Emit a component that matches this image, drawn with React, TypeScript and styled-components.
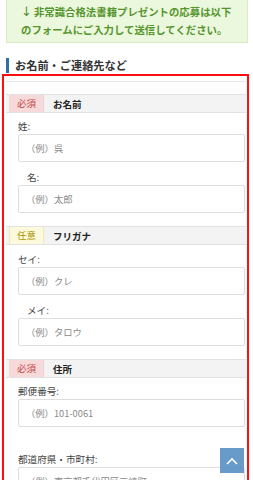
import React from "react";
import styled, { createGlobalStyle } from "styled-components";

const Global = createGlobalStyle`
  html, body { margin: 0; padding: 0; background: #fff; overflow: hidden; }
  body { font-family: "Noto Sans CJK JP", "Noto Sans", sans-serif; color: #333; }
  * { box-sizing: border-box; }
`;

const Page = styled.div`
  width: 253px;
  height: 480px;
  overflow: hidden;
  position: relative;
`;

const Notice = styled.div`
  margin: 0 5px 0 6px;
  padding: 3px 8px 4px 14px;
  background: #ebf8de;
  border: 1px solid #d5edc2;
  border-top: none;
  color: #55952c;
  font-weight: 700;
  font-size: 10.4px;
  line-height: 17.5px;
  white-space: nowrap;
`;

const Arrow = styled.span`
  font-weight: 400;
  font-family: "DejaVu Sans", sans-serif;
  font-size: 13px;
  line-height: 0;
  margin-right: 2px;
`;

const Heading = styled.h2`
  margin: 15px 0 0 6px;
  display: flex;
  align-items: center;
  gap: 6px;
  height: 15px;
  font-size: 11.2px;
  font-weight: 700;
  color: #333;
  line-height: 15px;
  &::before {
    content: "";
    display: block;
    width: 3px;
    height: 15px;
    background: #2f6fa8;
  }
`;

const FormBox = styled.div`
  margin: 1px 4px 0 2px;
  border: 2px solid #ff1010;
  border-bottom: none;
  padding: 5px 0 0 2px;
  height: 420px;
`;

const TopRule = styled.div`
  border-top: 1px solid #e6e6e6;
  margin-right: 1px;
`;

const Section = styled.section`
  padding-bottom: 13px;
  &:first-of-type {
    margin-top: 12px;
  }
`;

const SectionHead = styled.div`
  display: flex;
  align-items: stretch;
  height: 19px;
  margin-right: 1px;
  background: #f3f3f3;
  border-top: 1px solid #e2e2e2;
  border-bottom: 1px solid #e2e2e2;
`;

const Badge = styled.span<{ $optional?: boolean }>`
  display: flex;
  align-items: center;
  justify-content: center;
  width: 35px;
  margin-left: 3px;
  font-size: 9.5px;
  line-height: 1;
  background: ${(p) => (p.$optional ? "#fdf9dc" : "#f6dada")};
  color: ${(p) => (p.$optional ? "#a89500" : "#c64545")};
  border-right: 1px solid ${(p) => (p.$optional ? "#f1e9b4" : "#f0d0d0")};
  border-left: 1px solid ${(p) => (p.$optional ? "#f1e9b4" : "#f6dada")};
`;

const HeadLabel = styled.span`
  display: flex;
  align-items: center;
  margin-left: 9px;
  font-size: 9.5px;
  font-weight: 700;
  color: #222;
`;

const Field = styled.div<{ $gap: number }>`
  margin-top: ${(p) => p.$gap}px;
  padding-left: 12px;
  padding-right: 1px;
`;

const Label = styled.label<{ $indent?: boolean }>`
  display: block;
  height: 14px;
  line-height: 14px;
  font-size: 9.6px;
  color: #444;
  padding-left: ${(p) => (p.$indent ? 9 : 0)}px;
`;

const Input = styled.input`
  display: block;
  margin-top: 1px;
  width: 227px;
  height: 28px;
  border: 1px solid #dedede;
  border-radius: 2px;
  padding: 0 7px;
  font-family: "Noto Sans CJK JP", "Roboto", sans-serif;
  font-size: 9.3px;
  background: #fff;
  outline: none;
  &::placeholder {
    color: #8a8a8a;
  }
`;

const ToTop = styled.button`
  position: fixed;
  right: 9px;
  bottom: 7px;
  width: 24px;
  height: 25px;
  padding: 0;
  border: none;
  background: rgba(77, 138, 192, 0.85);
  display: flex;
  align-items: center;
  justify-content: center;
  cursor: pointer;
`;

type F = { label: string; ph: string; indent?: boolean; gap: number };
type S = { optional?: boolean; title: string; fields: F[] };

const sections: S[] = [
  {
    title: "お名前",
    fields: [
      { label: "姓:", ph: "（例）呉", gap: 6 },
      { label: "名:", ph: "（例）太郎", indent: true, gap: 8 },
    ],
  },
  {
    optional: true,
    title: "フリガナ",
    fields: [
      { label: "セイ:", ph: "（例）クレ", gap: 7 },
      { label: "メイ:", ph: "（例）タロウ", indent: true, gap: 8 },
    ],
  },
  {
    title: "住所",
    fields: [
      { label: "郵便番号:", ph: "（例）101-0061", gap: 6 },
      { label: "都道府県・市町村:", ph: "（例）東京都千代田区三崎町", gap: 25 },
    ],
  },
];

export default function App() {
  return (
    <Page>
      <Global />
      <Notice>
        <Arrow>↓</Arrow>非常識合格法書籍プレゼントの応募は以下
        <br />
        のフォームにご入力して送信してください。
      </Notice>
      <Heading>お名前・ご連絡先など</Heading>
      <FormBox>
        <TopRule />
        {sections.map((s) => (
          <Section key={s.title}>
            <SectionHead>
              <Badge $optional={s.optional}>{s.optional ? "任意" : "必須"}</Badge>
              <HeadLabel>{s.title}</HeadLabel>
            </SectionHead>
            {s.fields.map((f) => (
              <Field key={f.label} $gap={f.gap}>
                <Label $indent={f.indent}>{f.label}</Label>
                <Input placeholder={f.ph} readOnly />
              </Field>
            ))}
          </Section>
        ))}
      </FormBox>
      <ToTop aria-label="ページトップへ">
        <svg width="12" height="8" viewBox="0 0 12 8">
          <path d="M1 7 L6 2 L11 7" fill="none" stroke="#fff" strokeWidth="1.6" />
        </svg>
      </ToTop>
    </Page>
  );
}
